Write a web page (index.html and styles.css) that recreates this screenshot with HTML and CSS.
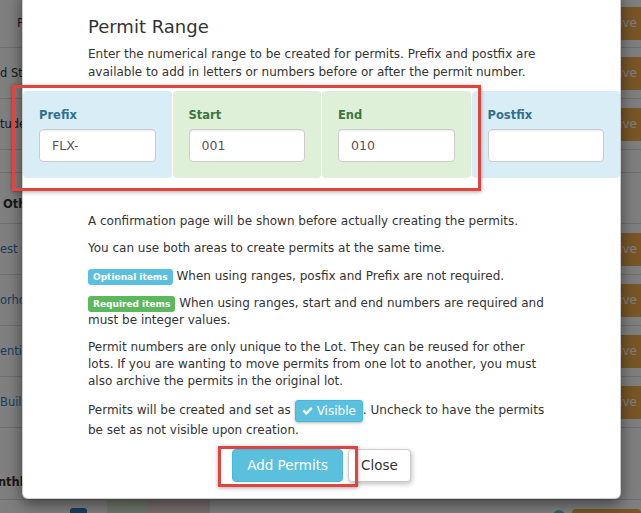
FILE: index.html
```html
<!DOCTYPE html>
<html>
<head>
<meta charset="utf-8">
<title>Permit Range</title>
<link rel="stylesheet" href="styles.css">
</head>
<body>
<div class="page">
  <div class="row row-first"><div class="name name-head">Permit</div><div class="act"><span class="bg-btn">Archive</span></div></div>
  <div class="row"><div class="name">d Street</div><div class="act"><span class="bg-btn">Archive</span></div></div>
  <div class="row"><div class="name">tudent</div><div class="act"><span class="bg-btn">Archive</span></div></div>
  <div class="gap-row"></div>
  <div class="sec-row sec-other"><div class="name name-sec">Other</div></div>
  <div class="row"><div class="name name-link">est Campus</div><div class="act"><span class="bg-btn">Archive</span></div></div>
  <div class="row"><div class="name name-link">orhood</div><div class="act"><span class="bg-btn">Archive</span></div></div>
  <div class="row"><div class="name name-link">ential</div><div class="act"><span class="bg-btn">Archive</span></div></div>
  <div class="row"><div class="name name-link">Building</div><div class="act"><span class="bg-btn">Archive</span></div></div>
  <div class="sec-row sec-month"><div class="name name-sec">onthly</div></div>
  <div class="row-last">
    <span class="last-link"></span>
    <span class="last-green"></span>
    <span class="last-red"></span>
    <span class="last-fill"></span>
    <span class="last-dot"></span>
    <span class="last-btn"></span>
  </div>
</div>
<div class="backdrop"></div>
<div class="modal">
  <div class="modal-body">
    <h4 class="modal-title">Permit Range</h4>
    <p class="txt intro">Enter the numerical range to be created for permits. Prefix and postfix are available to add in letters or numbers before or after the permit number.</p>
    <div class="range">
      <div class="pane pane-info">
        <label class="lbl lbl-info">Prefix</label>
        <input class="field" type="text" value="FLX-">
      </div>
      <div class="pane pane-ok">
        <label class="lbl lbl-ok">Start</label>
        <input class="field" type="text" value="001">
      </div>
      <div class="pane pane-ok">
        <label class="lbl lbl-ok">End</label>
        <input class="field" type="text" value="010">
      </div>
      <div class="pane pane-info">
        <label class="lbl lbl-info">Postfix</label>
        <input class="field" type="text" value="">
      </div>
      <div class="hl hl-range"></div>
    </div>
    <p class="txt">A confirmation page will be shown before actually creating the permits.</p>
    <p class="txt">You can use both areas to create permits at the same time.</p>
    <p class="txt"><span class="badge badge-info">Optional items</span> When using ranges, posfix and Prefix are not required.</p>
    <p class="txt"><span class="badge badge-ok">Required items</span> When using ranges, start and end numbers are required and must be integer values.</p>
    <p class="txt">Permit numbers are only unique to the Lot. They can be reused for other lots. If you are wanting to move permits from one lot to another, you must also archive the permits in the original lot.</p>
    <p class="txt last-p">Permits will be created and set as <span class="vis-btn"><svg class="check" width="11" height="10" viewBox="0 0 11 10"><path d="M0.4 5.3 L2.1 3.6 L4.3 5.7 L8.9 1.1 L10.6 2.8 L4.3 9.1 Z" fill="#fff"/></svg>Visible</span>. Uncheck to have the permits be set as not visible upon creation.</p>
  </div>
  <div class="modal-footer">
    <span class="add-wrap"><button class="btn btn-info">Add Permits</button><span class="hl hl-add"></span></span>
    <button class="btn btn-default">Close</button>
  </div>
</div>
</body>
</html>
```

FILE: styles.css
```css
* { box-sizing: border-box; }
html, body {
  margin: 0;
  padding: 0;
  width: 641px;
  height: 513px;
  overflow: hidden;
}
body {
  position: relative;
  font-family: "DejaVu Sans", Verdana, sans-serif;
  background: #fff;
  color: #333;
}

/* background page */
.page {
  display: flex;
  flex-direction: column;
  font-size: 11.5px;
  line-height: 17px;
}
.row {
  display: flex;
  align-items: center;
  height: 51px;
  border-bottom: 1px solid #ddd;
}
.row-first { height: 48px; }
.name { flex: 1; white-space: nowrap; color: #333; }
.name-head { padding-left: 17px; }
.name-link { color: #337ab7; }
.name-sec { font-weight: bold; padding-left: 3px; }
.act { display: flex; justify-content: flex-end; }
.bg-btn {
  display: block;
  width: 90px;
  height: 33px;
  margin-right: -10px;
  padding: 8px 14px 0 0;
  text-align: right;
  background: #f0ad4e;
  color: #fff;
  font-size: 12px;
  border-radius: 4px;
}
.gap-row { height: 23px; border-bottom: 1px solid #ddd; }
.sec-row {
  display: flex;
  align-items: flex-end;
  border-bottom: 1px solid #ddd;
}
.sec-other { height: 51px; padding-bottom: 10px; }
.sec-month { height: 72px; padding-bottom: 8px; }
.sec-month .name-sec { padding-left: 0; margin-left: -10px; }
.row-last {
  display: flex;
  height: 13px;
  align-items: flex-start;
  overflow: hidden;
}
.last-link {
  width: 17px;
  height: 6px;
  margin: 8px 20px 0 70px;
  border-radius: 3px 3px 0 0;
  background: #337ab7;
}
.last-green { width: 40px; height: 40px; background: #dff0d8; }
.last-red { width: 63px; height: 40px; background: #f2dede; }
.last-fill { flex: 1; }
.last-dot {
  width: 12px;
  height: 12px;
  margin-top: 10px;
  border-radius: 50%;
  background: #5bc0de;
}
.last-btn {
  width: 69px;
  height: 30px;
  margin: 9px 0 0 7px;
  background: #f0ad4e;
  border-radius: 4px;
}

.backdrop {
  position: absolute;
  inset: 0;
  background: rgba(0, 0, 0, 0.5);
}

/* modal */
.modal {
  position: absolute;
  left: 22px;
  top: -10px;
  width: 599px;
  background: #fff;
  border: 1px solid rgba(0, 0, 0, 0.2);
  border-radius: 6px;
  box-shadow: 0 5px 15px rgba(0, 0, 0, 0.5);
}
.modal-body { padding: 26px 70px 0 65px; }
.modal-title {
  margin: 0 0 9px;
  font-size: 18px;
  line-height: 20px;
  font-weight: normal;
  color: #333;
}
.txt {
  margin: 0 0 10.6px;
  font-size: 12px;
  line-height: 16.7px;
  color: #333;
}
.intro { line-height: 17.5px; margin-bottom: 10px; }

.range {
  position: relative;
  display: grid;
  grid-template-columns: repeat(4, 1fr);
  gap: 1px;
  margin: 0 -70px 35px -65px;
}
.pane {
  padding: 16px;
  border-radius: 4px;
}
.pane-info { background: #d9edf7; }
.pane-ok { background: #dff0d8; }
.lbl {
  display: block;
  margin-bottom: 5px;
  font-size: 11.5px;
  line-height: 17px;
  font-weight: bold;
}
.lbl-info { color: #31708f; }
.lbl-ok { color: #3c763d; }
.field {
  display: block;
  width: 100%;
  height: 33px;
  padding: 0 12px;
  font-family: "DejaVu Sans", Verdana, sans-serif;
  font-size: 12.5px;
  color: #555;
  background: #fff;
  border: 1px solid #ccc;
  border-radius: 4px;
  box-shadow: inset 0 1px 1px rgba(0, 0, 0, 0.075);
  outline: none;
}

.hl {
  position: absolute;
  border: 3px solid #e0443f;
  box-shadow: 0 1px 4px rgba(0, 0, 0, 0.35);
  pointer-events: none;
}
.hl-range { left: -11px; top: -6px; width: 469px; height: 106px; }

.badge {
  display: inline-block;
  padding: 2px 5px;
  font-size: 9px;
  line-height: 12px;
  font-weight: bold;
  color: #fff;
  border-radius: 3px;
}
.badge-info { background: #5bc0de; }
.badge-ok { background: #5cb85c; }

.vis-btn {
  display: inline-block;
  padding: 2px 6px;
  font-size: 12px;
  line-height: 16px;
  color: #fff;
  background: #5bc0de;
  border: 1px solid #46b8da;
  border-radius: 3px;
  box-shadow: 0 1px 3px rgba(0, 0, 0, 0.3);
  vertical-align: -1.5px;
}
.check { margin-right: 4px; vertical-align: -1px; }
.last-p { margin-bottom: 10px; }

.modal-footer {
  display: flex;
  justify-content: center;
  gap: 5px;
  padding: 0 0 16px;
}
.add-wrap { position: relative; display: flex; }
.hl-add { left: -14px; top: -3px; width: 140px; height: 41px; }
.btn {
  height: 33px;
  font-family: "DejaVu Sans", Verdana, sans-serif;
  font-size: 13.5px;
  border: 1px solid;
  border-radius: 4px;
}
.btn-info {
  padding: 0 14px;
  background: #5bc0de;
  border-color: #46b8da;
  color: #fff;
}
.btn-default {
  padding: 0 12px;
  background: #fff;
  border-color: #ccc;
  color: #333;
  box-shadow: 1px 2px 5px rgba(0, 0, 0, 0.25);
}
```
